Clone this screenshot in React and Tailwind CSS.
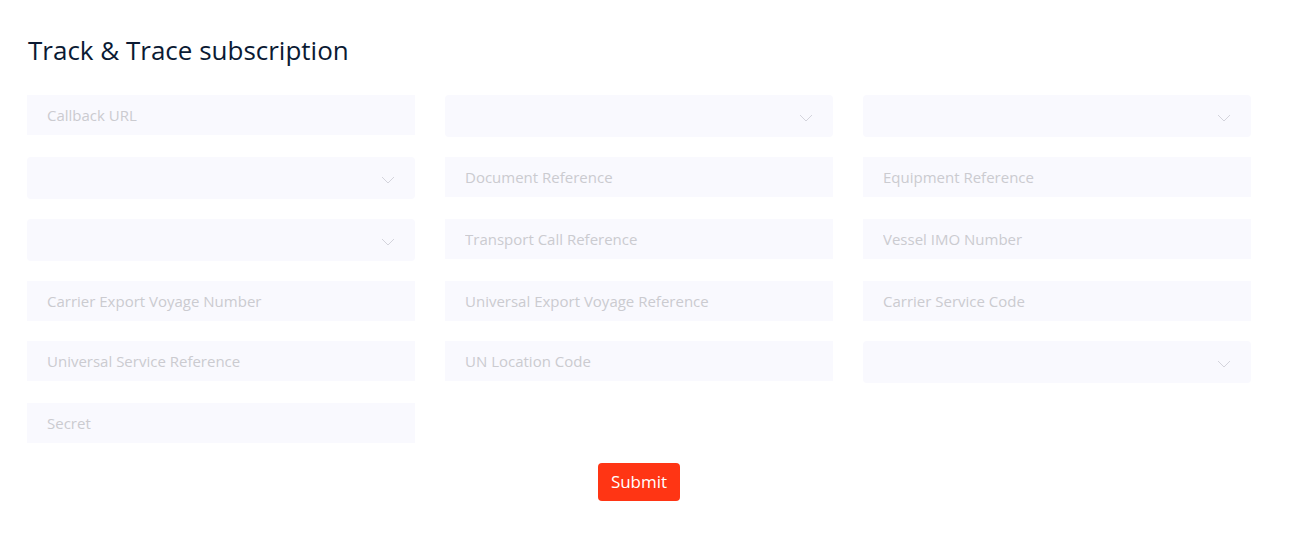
import React from 'react'

const Chevron = () => (
    <svg width="14" height="8" viewBox="0 0 14 8" fill="none" className="text-[#d4d4dc]">
        <path d="M1 1l6 6 6-6" stroke="currentColor" strokeWidth="1" />
    </svg>
)

const Field = ({ placeholder }) => (
    <input
        type="text"
        placeholder={placeholder}
        className="w-full h-10 bg-[#f9f9fe] px-5 text-[15px] text-[#333] placeholder:text-[#cbcbd0] outline-none"
    />
)

const Select = () => (
    <div className="w-full h-[42px] bg-[#f9f9fe] rounded flex items-center justify-end pr-5 pt-1">
        <Chevron />
    </div>
)

const fields = [
    { type: 'text', label: 'Callback URL' },
    { type: 'select' },
    { type: 'select' },
    { type: 'select' },
    { type: 'text', label: 'Document Reference' },
    { type: 'text', label: 'Equipment Reference' },
    { type: 'select' },
    { type: 'text', label: 'Transport Call Reference' },
    { type: 'text', label: 'Vessel IMO Number' },
    { type: 'text', label: 'Carrier Export Voyage Number' },
    { type: 'text', label: 'Universal Export Voyage Reference' },
    { type: 'text', label: 'Carrier Service Code' },
    { type: 'text', label: 'Universal Service Reference' },
    { type: 'text', label: 'UN Location Code' },
    { type: 'select' },
    { type: 'text', label: 'Secret' },
]

const App = () => {
    return (
        <div className="w-full min-h-screen bg-white font-['Open_Sans',sans-serif]">
            <div className="pl-[27px] pr-[38px] pt-[34px]">
                <h1 className="text-[26px] font-medium text-[#0b1a33] leading-8 ml-px">
                    Track &amp; Trace subscription
                </h1>
                <div className="grid grid-cols-3 gap-x-[30px] gap-y-5 items-start mt-[29px]">
                    {fields.map((f, i) =>
                        f.type === 'select' ? <Select key={i} /> : <Field key={i} placeholder={f.label} />
                    )}
                </div>
                <div className="flex justify-center mt-5">
                    <button className="h-[38px] px-[13px] bg-[#ff3514] text-white rounded text-[17px]">
                        Submit
                    </button>
                </div>
            </div>
        </div>
    )
}

export default App
